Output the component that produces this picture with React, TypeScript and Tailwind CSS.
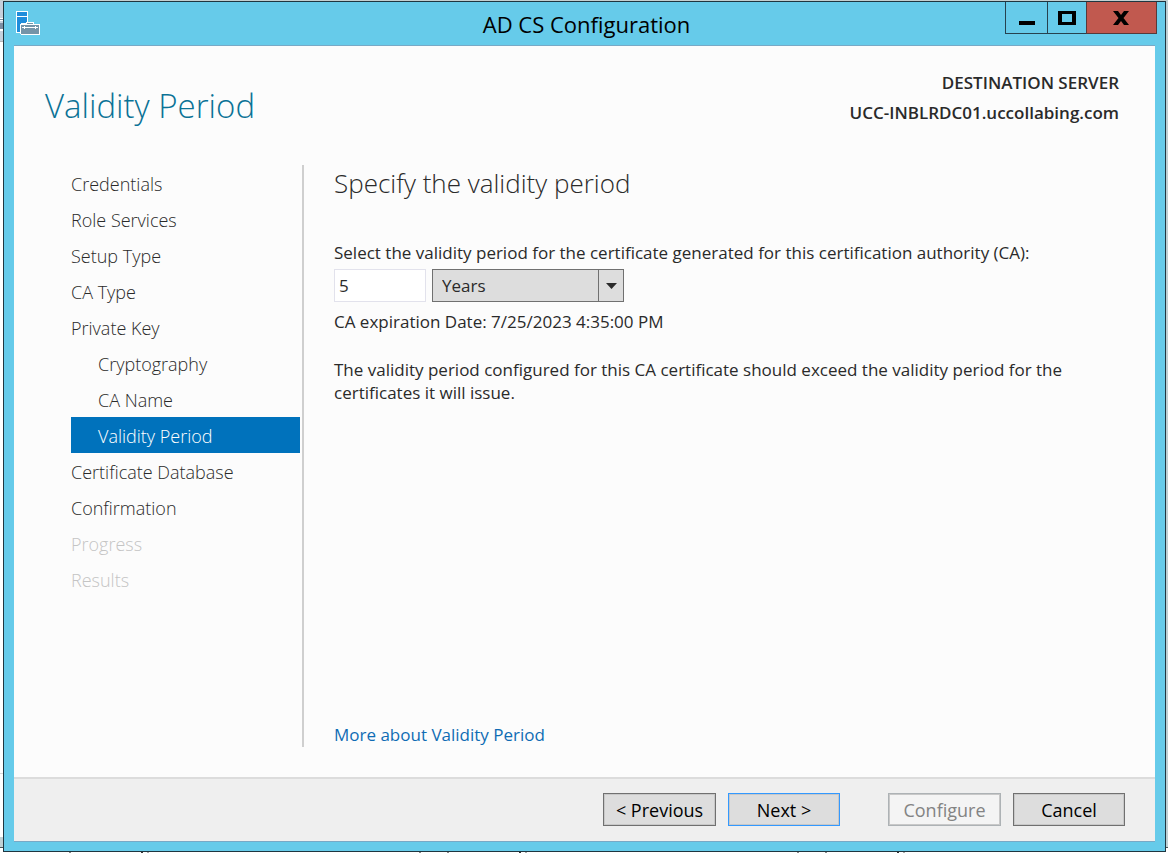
import React from "react";

type Step = { label: string; nested?: boolean; active?: boolean; disabled?: boolean };

const steps: Step[] = [
  { label: "Credentials" },
  { label: "Role Services" },
  { label: "Setup Type" },
  { label: "CA Type" },
  { label: "Private Key" },
  { label: "Cryptography", nested: true },
  { label: "CA Name", nested: true },
  { label: "Validity Period", nested: true, active: true },
  { label: "Certificate Database" },
  { label: "Confirmation" },
  { label: "Progress", disabled: true },
  { label: "Results", disabled: true },
];

function stepClass(step: Step) {
  const base = "flex h-9 w-full items-center pt-[2px] text-left text-[18px] leading-6 font-light";
  const indent = step.nested ? "pl-[27px]" : "";
  const tone = step.active
    ? "bg-[#0072bc] text-white"
    : step.disabled
      ? "text-[#c4c4c4]"
      : "text-[#2a2a2a]";
  return `${base} ${indent} ${tone}`;
}

function ServerIcon() {
  return (
    <svg width="24" height="24" viewBox="0 0 24 24" shapeRendering="crispEdges" aria-hidden="true">
      <path d="M0 0h12v22H0z" fill="#fff" />
      <path d="M1 1h10v4H1zM1 6h10v15H1z" fill="#1f8ddb" />
      <path d="M10 11h8v2h5l1 1v10H5l-1-1V13l1-1h5z" fill="#fff" />
      <path d="M11 12h6v1h-6zM5 14h18v9H5z" fill="#7594a8" />
      <path d="M6 16h16v1H6zM8 15h1v3H8zM19 15h1v3h-1z" fill="#fff" />
    </svg>
  );
}

function TitleBar() {
  return (
    <header className="grid h-[43px] grid-cols-[1fr_auto_1fr] items-start pl-3 pr-2">
      <div className="pt-[9px]">
        <ServerIcon />
      </div>
      <h1 className="pt-[7px] text-[22px] leading-[30px] text-black">AD CS Configuration</h1>
      <div className="flex h-8 justify-end">
        <button type="button" aria-label="Minimize" className="flex w-[43px] items-center justify-center border border-t-0 border-[#26424f]">
          <svg width="16" height="14" viewBox="0 0 16 14" shapeRendering="crispEdges">
            <path d="M0 10h16v4H0z" />
          </svg>
        </button>
        <button type="button" aria-label="Maximize" className="flex w-[38px] items-center justify-center border-b border-[#26424f]">
          <svg width="18" height="14" viewBox="0 0 18 14" shapeRendering="crispEdges">
            <path fillRule="evenodd" d="M0 0h18v14H0zM4 3v8h10V3z" />
          </svg>
        </button>
        <button type="button" aria-label="Close" className="flex w-[71px] items-center justify-center border border-t-0 border-[#573a3a] bg-[#c1594f] pr-[2px]">
          <svg width="16" height="14" viewBox="0 0 16 14">
            <path d="M0 0h5l3 4 3-4h5l-5.500 7L16 14h-5l-3-4-3 4H0l5.500-7z" />
          </svg>
        </button>
      </div>
    </header>
  );
}

const buttonBase = "h-[33px] border text-[18px] leading-6 shadow-[inset_0_0_0_1px_#c8c8c8]";

export default function App() {
  return (
    <div className="flex min-h-screen flex-col bg-white font-['Open_Sans','Noto_Sans',sans-serif]">
      <div className="flex grow flex-col border-t border-[#c3cfd0] pr-[2px] pl-[3px] [background:linear-gradient(#c6d0dc_0_17px,#fff_17px_18px,#7d8ea3_18px_19px,#fff_19px_20px,#c6d0dc_20px_22px,#7d8ea3_22px_28px,#fff_28px_30px,#c6d0dc_30px_40px,#b4b4b4_40px_41px,#fff_41px_772px,#d8d8d8_772px_773px,#fff_773px_836px,#bfd0d4_836px_846px,#4a5558_846px_847px,#fff_847px)_0_0/3px_100%_no-repeat,linear-gradient(#bfd0d4_0_846px,#4a5558_846px_847px,#fff_847px)]">
        <div className="flex grow flex-col border border-[#1f3640] bg-[#66cbea] pb-[9px]">
          <TitleBar />
          <div className="mr-[10px] ml-[10px] flex grow flex-col border-y border-[#78a9c6] bg-[#fcfcfc]">
            <div className="flex items-start justify-between pr-9 pl-[31px] pt-[22px]">
              <h2 className="pt-[14px] text-[33px] leading-[48px] font-light text-[#0a7296]">Validity Period</h2>
              <div className="text-right text-[17px] leading-[30px] font-semibold text-[#2a2a2a]">
                <p>DESTINATION SERVER</p>
                <p>UCC-INBLRDC01.uccollabing.com</p>
              </div>
            </div>
            <div className="mb-[30px] flex grow pt-[35px] pl-[57px]">
              <nav aria-label="Wizard steps" className="w-[233px] shrink-0 border-r-2 border-[#cfcfcf] pr-[2px]">
                <ul>
                  {steps.map((step) => (
                    <li key={step.label}>
                      <button
                        type="button"
                        disabled={step.disabled}
                        aria-current={step.active ? "step" : undefined}
                        className={stepClass(step)}
                      >
                        {step.label}
                      </button>
                    </li>
                  ))}
                </ul>
              </nav>
              <main className="flex grow flex-col pr-9 pl-[30px] text-[17px] leading-6 text-[#2a2a2a]">
                <h3 className="text-[26px] leading-9 font-light">Specify the validity period</h3>
                <label htmlFor="period" className="mt-10">
                  Select the validity period for the certificate generated for this certification authority (CA):
                </label>
                <div className="mt-1 flex gap-[6px]">
                  <input
                    id="period"
                    type="text"
                    defaultValue="5"
                    className="h-[33px] w-[92px] border border-[#e2e2ec] bg-white px-1"
                  />
                  <div className="relative w-48">
                    <select
                      aria-label="Unit"
                      className="h-[33px] w-full appearance-none border border-[#707070] bg-[#dddddd] pl-[9px]"
                      defaultValue="Years"
                    >
                      <option>Years</option>
                    </select>
                    <span className="pointer-events-none absolute inset-y-0 right-0 flex w-[26px] items-center justify-center border border-[#707070]">
                      <svg width="11" height="6" viewBox="0 0 11 6" aria-hidden="true">
                        <path d="M0 0h11L5.500 6z" fill="#2a2a2a" />
                      </svg>
                    </span>
                  </div>
                </div>
                <p className="mt-2">CA expiration Date: 7/25/2023 4:35:00 PM</p>
                <p className="mt-6 leading-[23px]">
                  The validity period configured for this CA certificate should exceed the validity period for the certificates it will issue.
                </p>
                <a href="#more" className="mt-auto self-start text-[#0f6cb4]">More about Validity Period</a>
              </main>
            </div>
            <footer className="flex h-16 justify-end border-t-2 border-[#dcdcdc] bg-[#efefef] pt-[14px] pr-[30px]">
              <div className="flex gap-3">
                <button type="button" className={`${buttonBase} w-[113px] border-[#707070] bg-[#dddddd]`}>&lt; Previous</button>
                <button type="button" className={`${buttonBase} w-28 border-[#3399ff] bg-[#dddddd]`}>Next &gt;</button>
              </div>
              <div className="ml-12 flex gap-3">
                <button type="button" disabled className={`${buttonBase} w-[113px] border-[#adb2b5] bg-[#f4f4f4] text-[#838383]`}>Configure</button>
                <button type="button" className={`${buttonBase} w-28 border-[#707070] bg-[#dddddd]`}>Cancel</button>
              </div>
            </footer>
          </div>
        </div>
      </div>
      <div className="flex h-[6px] overflow-hidden" aria-hidden="true">
        <span className="ml-[69px] h-px w-[2px] bg-[#888]" />
        <span className="ml-[70px] h-px w-[2px] bg-[#333]" />
        <span className="ml-1 h-px w-[2px] bg-[#aaa]" />
        <span className="ml-[270px] h-px w-[2px] bg-[#888]" />
        <span className="ml-[26px] h-px w-[2px] bg-[#888]" />
        <span className="ml-[70px] h-px w-[2px] bg-[#333]" />
        <span className="ml-1 h-px w-[2px] bg-[#aaa]" />
        <span className="ml-[270px] h-px w-[2px] bg-[#888]" />
        <span className="ml-[26px] h-px w-[2px] bg-[#888]" />
        <span className="ml-[70px] h-px w-[2px] bg-[#333]" />
        <span className="ml-1 h-px w-[2px] bg-[#aaa]" />
      </div>
    </div>
  );
}
